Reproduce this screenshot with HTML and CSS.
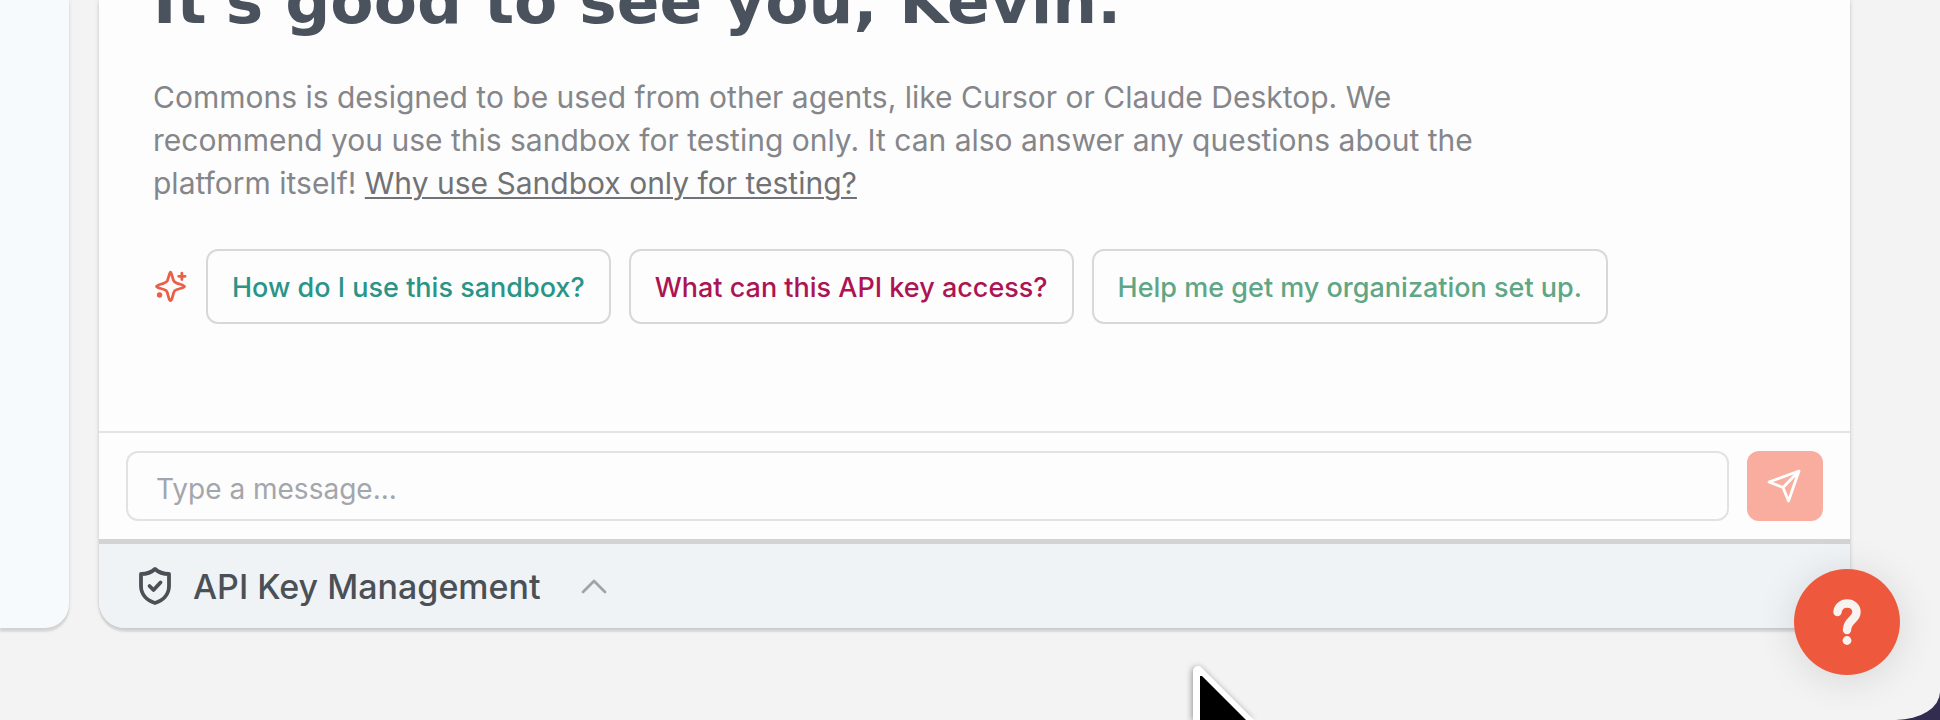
FILE: index.html
```html
<!DOCTYPE html>
<html lang="en">
  <head>
    <meta charset="UTF-8" />
    <meta name="viewport" content="width=device-width, initial-scale=1">
    <title>Commons Sandbox</title>
    <link rel="stylesheet" href="styles.css">
  </head>
  <body>
    <div class="app">
      <div class="panels">
        <aside class="side_panel"></aside>
        <main class="chat_panel">
          <section class="chat_cont">
            <h1 class="chat_tit">It's good to see you, Kevin.</h1>
            <p class="chat_desc">Commons is designed to be used from other agents, like Cursor or Claude Desktop. We recommend you use this sandbox for testing only. It can also answer any questions about the platform itself! <a href="#">Why use Sandbox only for testing?</a></p>
            <div class="suggest">
              <svg class="ico_spark" viewBox="0 0 24 24" fill="none" stroke="currentColor" stroke-width="1.9" stroke-linecap="round" stroke-linejoin="round" aria-hidden="true">
                <path d="M12 2.200C12.800 2.200 13.100 5.800 14.200 8.100C15.200 10.200 21.600 10.700 21.600 12C21.600 13.300 16.400 13.300 15 14.800C13.500 16.300 13.400 21.700 12 21.700C10.600 21.700 10.500 16.300 9 14.800C7.500 13.300 2.400 13.300 2.400 12C2.400 10.700 8.700 10.200 9.800 8.100C10.900 5.800 11.200 2.200 12 2.200Z"/>
                <path d="M19.800 2.800v4.400M17.600 5h4.400"/>
                <circle cx="4.500" cy="17.800" r="0.900" fill="currentColor"/>
              </svg>
              <button type="button" class="btn_suggest teal">How do I use this sandbox?</button>
              <button type="button" class="btn_suggest pink">What can this API key access?</button>
              <button type="button" class="btn_suggest green">Help me get my organization set up.</button>
            </div>
          </section>
          <form class="chat_form">
            <input type="text" class="chat_input" placeholder="Type a message..." aria-label="Message">
            <button type="button" class="btn_send" aria-label="Send">
              <svg viewBox="0 0 36 36" fill="none" stroke="currentColor" stroke-width="2.800" stroke-linejoin="round" stroke-linecap="round" aria-hidden="true">
                <path d="M32 3L2 14L16 19.500L21.500 33ZM32 3L16 19.500"/>
              </svg>
            </button>
          </form>
          <button type="button" class="key_bar">
            <svg class="ico_shield" viewBox="0 0 32 38" fill="none" stroke="currentColor" stroke-width="3.800" stroke-linecap="round" stroke-linejoin="round" aria-hidden="true">
              <path d="M16 2C12.500 5.300 7.500 7 2 7V19C2 27.500 8 33.500 16 36C24 33.500 30 27.500 30 19V7C24.500 7 19.500 5.300 16 2Z"/>
              <path d="M10.500 19l4 4l7-7.500"/>
            </svg>
            <span>API Key Management</span>
            <svg class="ico_arrow" viewBox="0 0 26 16" fill="none" stroke="currentColor" stroke-width="2.800" stroke-linecap="round" stroke-linejoin="round" aria-hidden="true">
              <path d="M2 14L13 3L24 14"/>
            </svg>
          </button>
        </main>
      </div>
    </div>
    <button type="button" class="btn_help" aria-label="Help">
      <svg viewBox="0 0 28 46" aria-hidden="true">
        <path d="M4.500 13C5 8 9 4.500 14 4.500C19.500 4.500 23.500 8 23.500 13C23.500 21 14 21 14 31" fill="none" stroke="#f8f3f1" stroke-width="8.400" stroke-linecap="round"/>
        <circle cx="14" cy="41.500" r="4.400" fill="#f8f3f1"/>
      </svg>
    </button>
    <svg class="cursor" viewBox="0 0 70 60" aria-hidden="true">
      <path d="M7 74V11L70 74Z" fill="#fff" stroke="#fff" stroke-width="10" stroke-linejoin="round"/>
      <path d="M9 60V16H11L55 60Z" fill="#000"/>
    </svg>
  </body>
</html>
```

FILE: styles.css
```css
* {padding: 0; margin: 0; box-sizing: border-box;}
body, html {height: 100%;}
body {background: #322d50; font-family: Inter, "Liberation Sans", sans-serif; overflow: hidden;}
button {border: 0; background: none; font-family: inherit; cursor: pointer;}
svg {display: block; flex: none;}

.app {height: 100%; padding: 0 90px 92px 0; background: #f3f3f3; border-bottom-right-radius: 44px 28px; display: flex;}
.panels {flex: 1; display: flex; gap: 30px; min-width: 0;}
.side_panel {width: 69px; background: #f6fafd; border-bottom-right-radius: 24px; box-shadow: 0 4px 2px rgba(0, 0, 0, 0.1), 0 0 4px rgba(0, 0, 0, 0.1);}
.chat_panel {flex: 1; min-width: 0; display: flex; flex-direction: column; background: #fdfdfd; border-radius: 0 0 26px 26px; box-shadow: 0 4px 2px rgba(0, 0, 0, 0.1), 0 0 4px rgba(0, 0, 0, 0.16);}

/* message area, stays scrolled to the bottom */
.chat_cont {flex: 1; min-height: 0; display: flex; flex-direction: column; justify-content: flex-end; padding: 0 54px 107px; overflow: hidden;}
.chat_tit {font-family: "DejaVu Sans", sans-serif; font-size: 63px; line-height: 72px; font-weight: 700; color: #4a525e; margin-bottom: 38px; white-space: nowrap;}
.chat_desc {max-width: 1340px; font-size: 30px; line-height: 43px; color: #85868a; margin-bottom: 44px;}
.chat_desc a {color: #707276; text-decoration: underline; text-decoration-thickness: 2px; text-underline-offset: 3px;}

.suggest {display: flex; align-items: center; gap: 18px;}
.ico_spark {width: 35px; height: 35px; color: #ec5f46;}
.btn_suggest {height: 75px; padding: 2px 24px 0; border: 2px solid #d8d8d8; border-radius: 12px; font-size: 27px; font-weight: 500; white-space: nowrap;}
.teal {color: #2a9487;}
.pink {color: #ac1453;}
.green {color: #5fa685;}

.chat_form {display: flex; gap: 18px; padding: 18px 27px; border-top: 2px solid #e4e4e4;}
.chat_input {flex: 1; min-width: 0; height: 70px; padding: 6px 28px 0; border: 2px solid #e2e2e2; border-radius: 12px; background: #fdfdfd; font-family: inherit; font-size: 28px; color: #4a525e; outline: none;}
.chat_input::placeholder {color: #a3a6ac; opacity: 1;}
.btn_send {width: 76px; height: 70px; border-radius: 12px; background: #f8ad9f; color: #fff; display: flex; align-items: center; justify-content: center;}
.btn_send svg {width: 36px; height: 36px;}

.key_bar {height: 89px; padding: 0 40px; border-top: 5px solid #d3d3d3; border-radius: 0 0 26px 26px; background: #eff3f6; display: flex; align-items: center; color: #4b5057; font-size: 34px; font-weight: 500;}
.ico_shield {width: 32px; height: 38px; margin-right: 22px;}
.ico_arrow {width: 26px; height: 16px; margin-left: 40px; color: #a0a3a7;}

.btn_help {position: fixed; right: 40px; bottom: 45px; width: 106px; height: 106px; border-radius: 50%; background: #ee583d; display: flex; align-items: center; justify-content: center; box-shadow: 0 4px 40px rgba(0, 0, 0, 0.12);}
.btn_help svg {width: 28px; height: 46px;}
.cursor {position: fixed; left: 1191px; bottom: 0; width: 70px; height: 60px; filter: drop-shadow(-1px 1px 3px rgba(0, 0, 0, 0.4));}
```
